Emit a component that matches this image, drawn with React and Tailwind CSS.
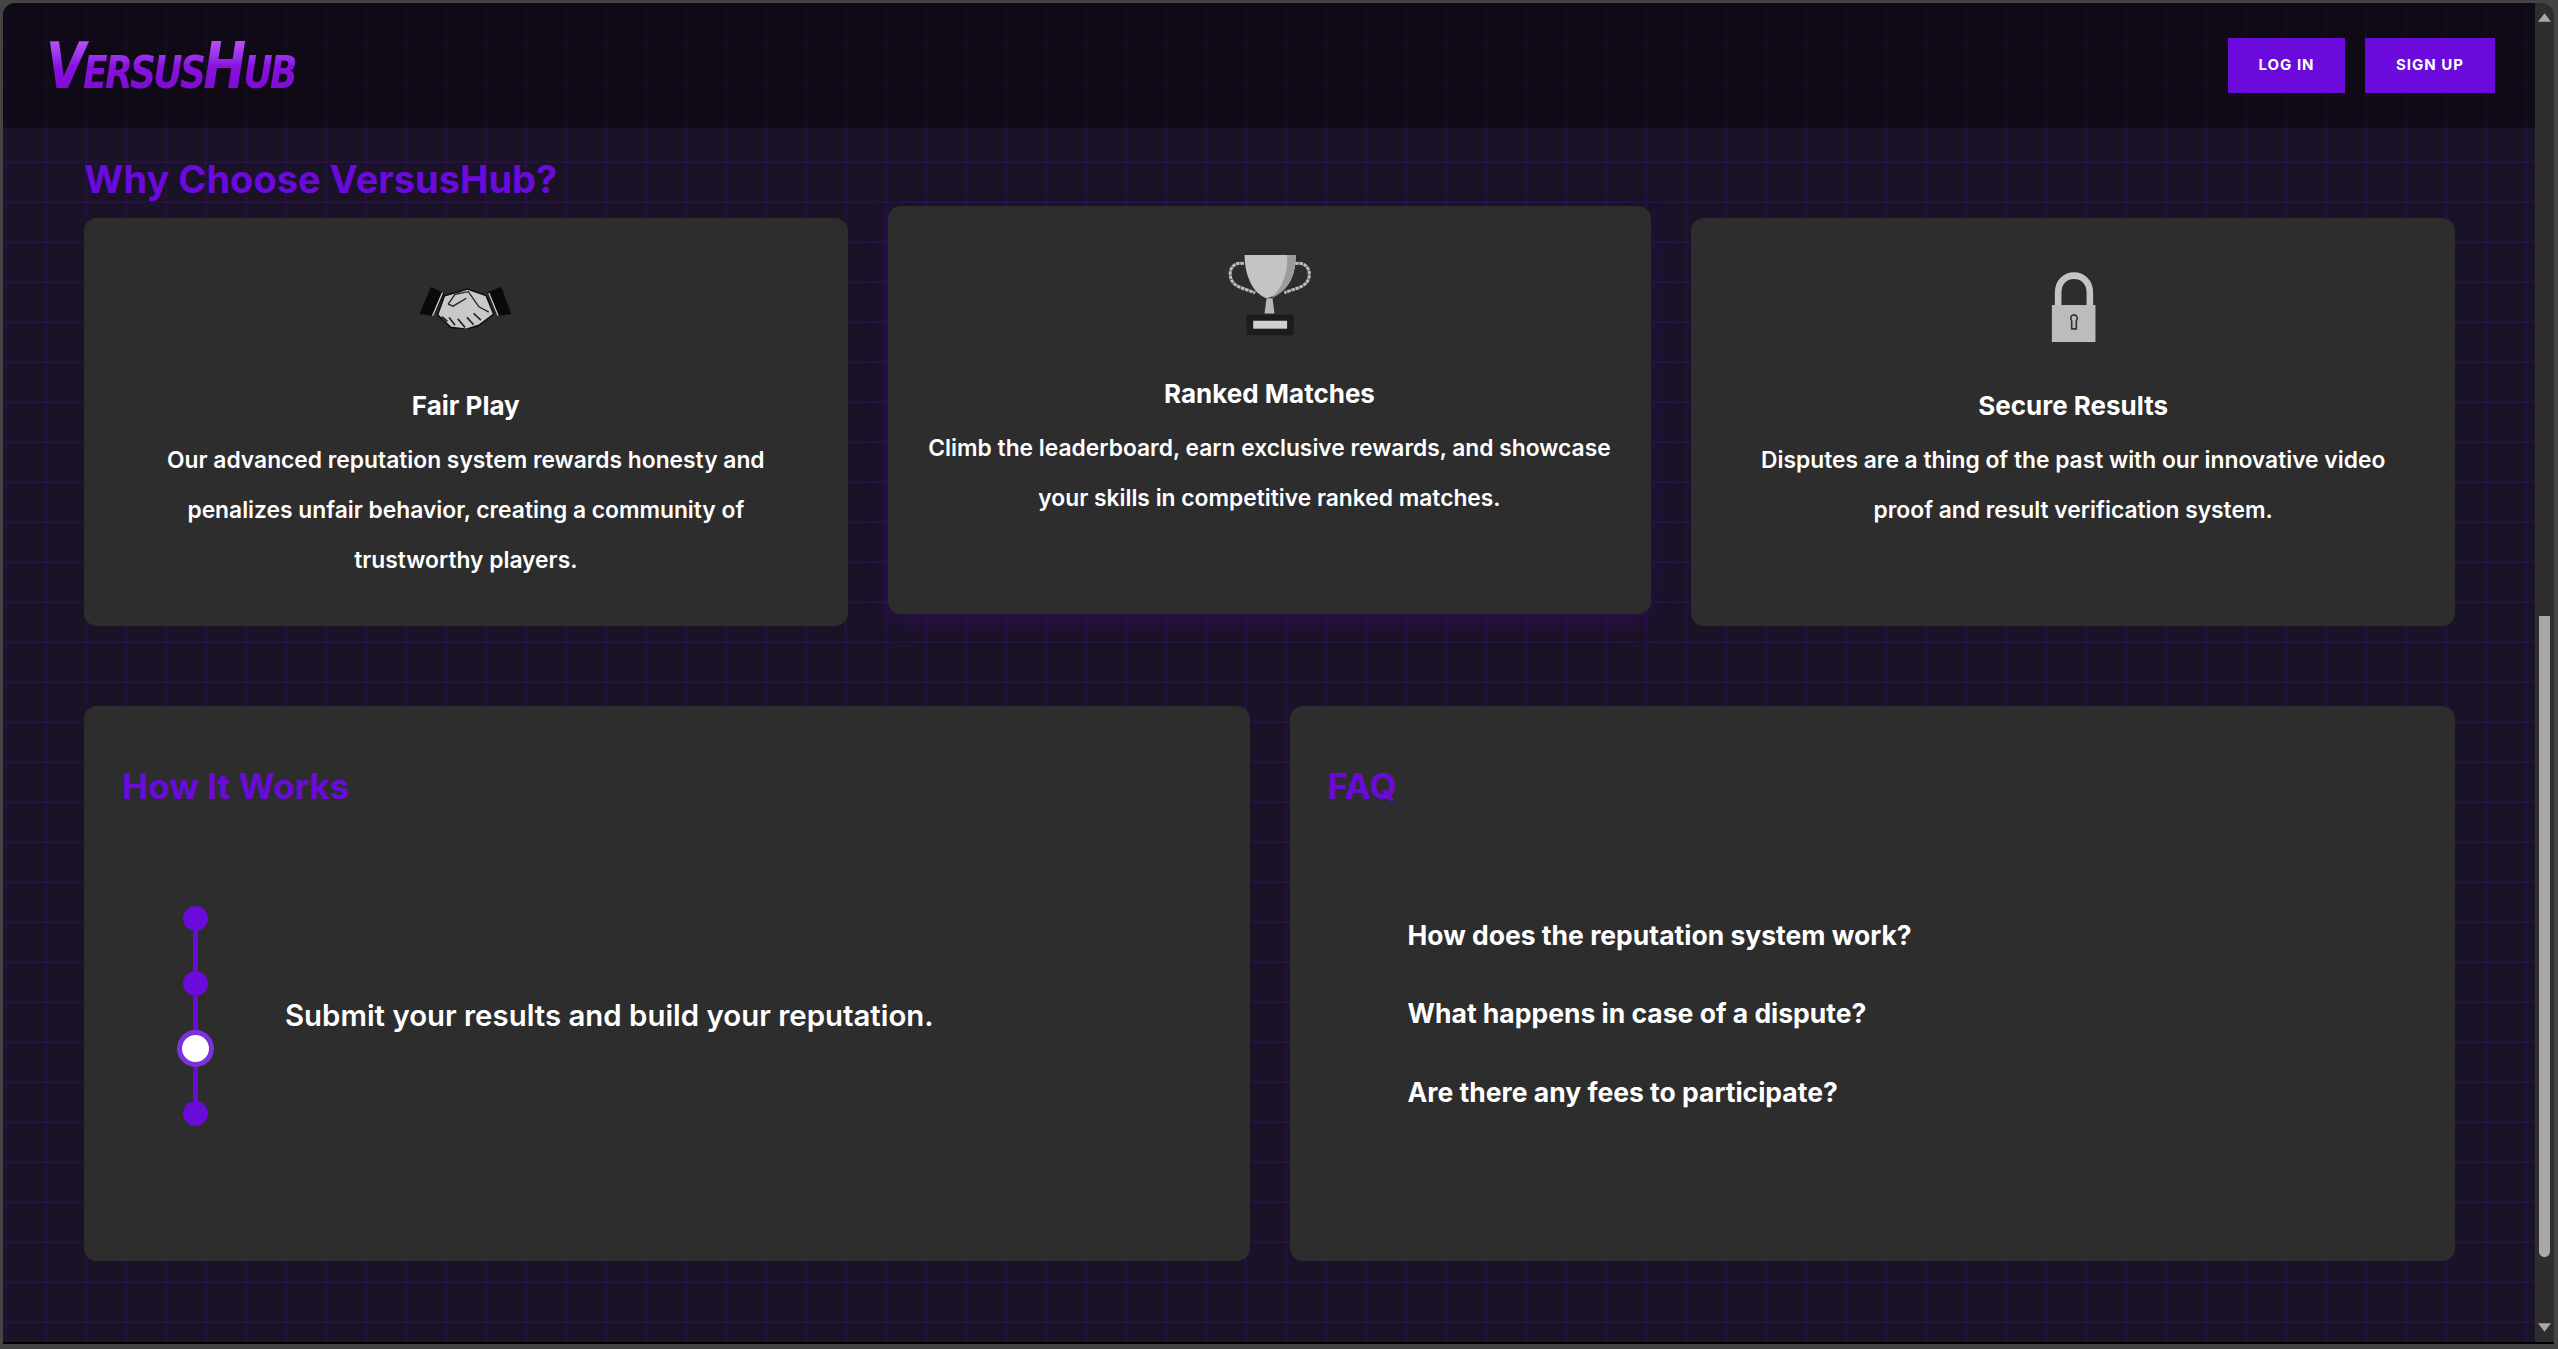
const sans = "font-['Inter',sans-serif]";

function Handshake() {
  return (
    <svg viewBox="120 105 279 130" width="93" height="43">
      <path d="M120 190 L155 108 L196 126 L162 196 Z" fill="#0a0a0a" />
      <path d="M325 125 L368 108 L398 190 L355 196 Z" fill="#0a0a0a" />
      <path d="M175 192 L196 134 L240 122 L265 114 L322 134 L345 190 L300 224 L262 236 L215 230 Z" fill="#c9c9c9" stroke="#111" strokeWidth="5" strokeLinejoin="round" />
      <path d="M207 160 L228 130 L268 122 L300 168 L330 184" fill="none" stroke="#222" strokeWidth="4" />
      <path d="M207 160 L222 166 L262 142" fill="none" stroke="#222" strokeWidth="4" />
      <path d="M188 198 L205 212 M210 200 L228 224 M236 204 L258 230 M264 200 L284 222 M284 188 L306 208" stroke="#222" strokeWidth="5" />
      <path d="M160 195 L190 125 M330 126 L358 195" stroke="#ccc" strokeWidth="4" />
    </svg>
  );
}

function Trophy() {
  return (
    <svg viewBox="110 60 250 245" width="83" height="82">
      <path d="M158 88 C118 80 106 120 126 146 C140 162 170 166 192 176" fill="none" stroke="#bdbdbd" strokeWidth="9" strokeDasharray="11 2" />
      <path d="M312 88 C352 80 366 120 346 146 C332 162 300 166 280 176" fill="none" stroke="#bdbdbd" strokeWidth="9" strokeDasharray="11 2" />
      <path d="M160 62 L314 62 C314 120 296 176 225 192 C182 176 160 120 160 62 Z" fill="#c4c4c4" />
      <path d="M288 62 L314 62 C314 120 296 170 240 192 C276 160 292 110 288 62 Z" fill="#9c9c9c" />
      <path d="M226 192 L244 192 L250 238 L220 238 Z" fill="#b8b8b8" />
      <rect x="166" y="242" width="142" height="62" rx="2" fill="#1c1c1c" />
      <rect x="186" y="260" width="102" height="24" fill="#cfcfcf" />
    </svg>
  );
}

function Lock() {
  return (
    <svg viewBox="90 50 135 215" width="45" height="71">
      <path d="M111 152 L111 112 C111 44 207 44 207 112 L207 152" fill="none" stroke="#c4c4c4" strokeWidth="20" />
      <rect x="92" y="150" width="132" height="112" fill="#bcbcbc" />
      <path d="M158 180 C168 180 172 190 166 198 L166 222 L152 222 L152 198 C146 190 150 180 158 180 Z" fill="none" stroke="#333" strokeWidth="5" />
    </svg>
  );
}

const features = [
  { icon: <Handshake />, title: "Fair Play", text: "Our advanced reputation system rewards honesty and penalizes unfair behavior, creating a community of trustworthy players." },
  { icon: <Trophy />, title: "Ranked Matches", text: "Climb the leaderboard, earn exclusive rewards, and showcase your skills in competitive ranked matches.", raised: true },
  { icon: <Lock />, title: "Secure Results", text: "Disputes are a thing of the past with our innovative video proof and result verification system." },
];

const faqs = ["How does the reputation system work?", "What happens in case of a dispute?", "Are there any fees to participate?"];

function Steps() {
  return (
    <div className="flex flex-col items-center w-[37px] ml-[55px] shrink-0">
      {[0, 1, 2, 3].map((i) => (
        <div key={i} className="flex flex-col items-center">
          {i > 0 && <div className={i === 2 || i === 3 ? "w-[5px] h-[34px] bg-[#6a0adb]" : "w-[5px] h-[40px] bg-[#6a0adb]"} />}
          {i === 2 ? (
            <div className="w-[37px] h-[37px] rounded-full bg-white border-[5px] border-[#7a32dc]" />
          ) : (
            <div className="w-[25px] h-[25px] rounded-full bg-[#6a0adb]" />
          )}
        </div>
      ))}
    </div>
  );
}

export default function App() {
  return (
    <div className={`h-[1349px] w-full overflow-hidden bg-[#444444] pt-[3px] pl-[3px] pr-[4px] pb-[5px] ${sans}`}>
      <div className="h-full flex flex-col rounded-t-[12px] overflow-hidden border-b-2 border-black">
        <div className="flex flex-1 min-h-0">
          <div className="flex-1 flex flex-col bg-[#1a1226] bg-[linear-gradient(rgba(106,10,219,0.14)_2px,transparent_2px),linear-gradient(90deg,rgba(106,10,219,0.14)_2px,transparent_2px)] bg-[size:40px_40px] bg-[position:2px_-2px]">
            <header className="h-[125px] shrink-0 flex items-center justify-between pl-[43px] pr-[40px] bg-black/40">
              <div className="text-[64px] leading-[64px] font-bold italic [font-variant:small-caps] [font-stretch:condensed] font-['DejaVu_Sans',sans-serif] tracking-[-3px] origin-left scale-x-[0.89] text-transparent bg-clip-text bg-gradient-to-b from-[#c45cff] via-[#8a10e0] to-[#7a0ccc] pr-2">
                VersusHub
              </div>
              <div className="flex gap-[20px]">
                <button className="w-[117px] h-[55px] bg-[#6a0adb] text-white text-[15px] font-bold tracking-[1px]">LOG IN</button>
                <button className="w-[130px] h-[55px] bg-[#6a0adb] text-white text-[15px] font-bold tracking-[1px]">SIGN UP</button>
              </div>
            </header>
            <main className="pl-[81px] pr-[80px] flex-1">
              <h2 className="text-[38px] leading-[48px] mt-[27px] mb-[15px] font-bold text-[#6a0adb] whitespace-nowrap">Why Choose VersusHub?</h2>
              <div className="grid grid-cols-3 gap-[40px]">
                {features.map((f) => (
                  <div key={f.title} className={f.raised ? "bg-[#2d2d2d] rounded-[13px] py-[40px] px-[38px] h-[408px] text-center text-white -translate-y-[12px] shadow-[0_8px_24px_rgba(106,10,219,0.2)]" : "bg-[#2d2d2d] rounded-[13px] py-[40px] px-[38px] h-[408px] text-center text-white"}>
                    <div className="h-[98px] flex items-center justify-center">{f.icon}</div>
                    <h3 className="text-[26px] leading-[30px] mt-[35px] mb-[14px] font-bold">{f.title}</h3>
                    <p className="text-[22.8px] leading-[50px] font-semibold">{f.text}</p>
                  </div>
                ))}
              </div>
              <div className="grid grid-cols-2 gap-[40px] mt-[80px]">
                <section className="h-[555px] bg-[#2d2d2d] rounded-[13px] px-[38px] pt-[54px] pb-[41px] flex flex-col">
                  <h2 className="text-[35px] h-[52px] leading-[52px] font-bold text-[#6a0adb]">How It Works</h2>
                  <div className="flex-1 flex items-center">
                    <Steps />
                    <p className="ml-[71px] text-[29.4px] text-white font-semibold">Submit your results and build your reputation.</p>
                  </div>
                </section>
                <section className="h-[555px] bg-[#2d2d2d] rounded-[13px] px-[38px] pt-[54px] pb-[45px] flex flex-col">
                  <h2 className="text-[35px] h-[52px] leading-[52px] font-bold text-[#6a0adb]">FAQ</h2>
                  <div className="flex-1 flex flex-col justify-center pl-[80px]">
                    {faqs.map((q) => (
                      <div key={q} className="h-[78.5px] flex items-center text-[26.5px] font-bold text-white">{q}</div>
                    ))}
                  </div>
                </section>
              </div>
            </main>
          </div>
          {/* scrollbar */}
          <div className="w-[19px] shrink-0 bg-[#2e2e2e] flex flex-col items-center rounded-tr-[12px]">
            <svg viewBox="0 0 12 8" className="w-[13px] h-[9px] mt-[10px] fill-[#a8a8a8]"><path d="M6 0 L12 8 L0 8 Z" /></svg>
            <div className="w-[11px] h-[641px] mt-[594px] rounded-b-[6px] bg-[#a8a8a8]" />
            <div className="flex-1" />
            <svg viewBox="0 0 12 8" className="w-[13px] h-[9px] mb-[10px] fill-[#a8a8a8]"><path d="M0 0 L12 0 L6 8 Z" /></svg>
          </div>
        </div>
      </div>
    </div>
  );
}
